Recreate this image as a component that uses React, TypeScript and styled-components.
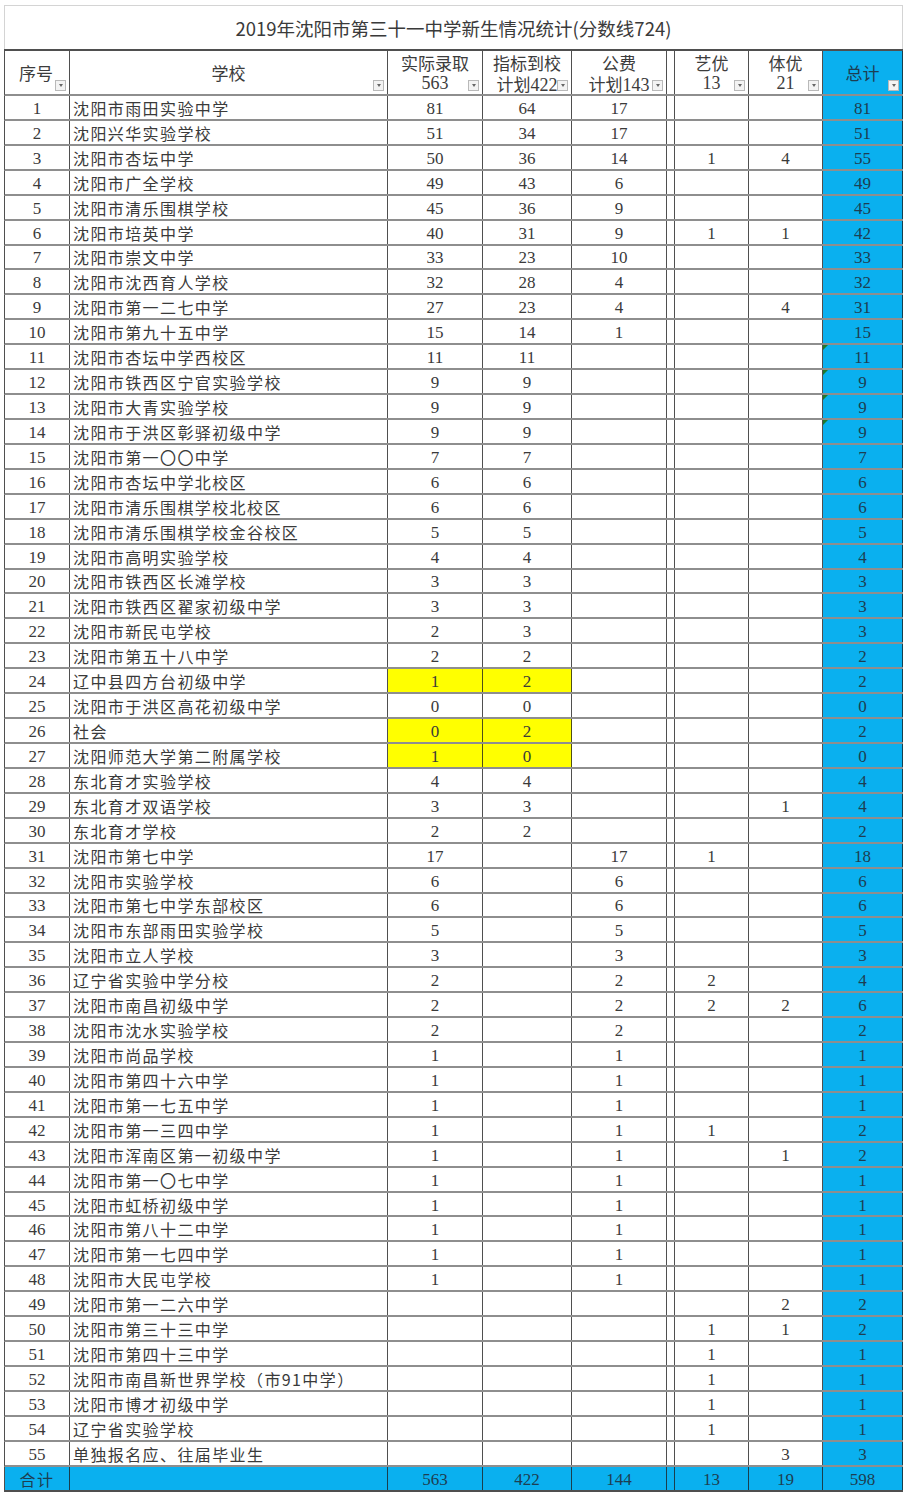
import React from "react";
import styled, { createGlobalStyle } from "styled-components";

const GlobalStyle = createGlobalStyle`
  body {
    margin: 0;
    background: #ffffff;
    font-family: "Noto Sans CJK SC", "Noto Sans", sans-serif;
    color: #333;
  }
`;

const BLUE = "#0ab0ef";
const YELLOW = "#ffff00";
const COLS = "65px 318px 95px 89px 95px 8px 74px 74px 80px";
const LINE = "rgba(30, 30, 30, 0.78)";
const ROWLINE = "rgba(30, 30, 30, 0.5)";

type Row = [string, string, string, string, string, string, string, boolean?, string[]?];

// [name, 实际录取, 指标到校, 公费, 艺优, 体优, 总计, green corner mark, yellow cols]
const rows: Row[] = [
  ["沈阳市雨田实验中学", "81", "64", "17", "", "", "81"],
  ["沈阳兴华实验学校", "51", "34", "17", "", "", "51"],
  ["沈阳市杏坛中学", "50", "36", "14", "1", "4", "55"],
  ["沈阳市广全学校", "49", "43", "6", "", "", "49"],
  ["沈阳市清乐围棋学校", "45", "36", "9", "", "", "45"],
  ["沈阳市培英中学", "40", "31", "9", "1", "1", "42"],
  ["沈阳市崇文中学", "33", "23", "10", "", "", "33"],
  ["沈阳市沈西育人学校", "32", "28", "4", "", "", "32"],
  ["沈阳市第一二七中学", "27", "23", "4", "", "4", "31"],
  ["沈阳市第九十五中学", "15", "14", "1", "", "", "15"],
  ["沈阳市杏坛中学西校区", "11", "11", "", "", "", "11", true],
  ["沈阳市铁西区宁官实验学校", "9", "9", "", "", "", "9", true],
  ["沈阳市大青实验学校", "9", "9", "", "", "", "9", true],
  ["沈阳市于洪区彰驿初级中学", "9", "9", "", "", "", "9", true],
  ["沈阳市第一〇〇中学", "7", "7", "", "", "", "7"],
  ["沈阳市杏坛中学北校区", "6", "6", "", "", "", "6"],
  ["沈阳市清乐围棋学校北校区", "6", "6", "", "", "", "6"],
  ["沈阳市清乐围棋学校金谷校区", "5", "5", "", "", "", "5"],
  ["沈阳市高明实验学校", "4", "4", "", "", "", "4"],
  ["沈阳市铁西区长滩学校", "3", "3", "", "", "", "3"],
  ["沈阳市铁西区翟家初级中学", "3", "3", "", "", "", "3"],
  ["沈阳市新民屯学校", "2", "3", "", "", "", "3"],
  ["沈阳市第五十八中学", "2", "2", "", "", "", "2"],
  ["辽中县四方台初级中学", "1", "2", "", "", "", "2", false, ["a", "b"]],
  ["沈阳市于洪区高花初级中学", "0", "0", "", "", "", "0"],
  ["社会", "0", "2", "", "", "", "2", false, ["a", "b"]],
  ["沈阳师范大学第二附属学校", "1", "0", "", "", "", "0", false, ["a", "b"]],
  ["东北育才实验学校", "4", "4", "", "", "", "4"],
  ["东北育才双语学校", "3", "3", "", "", "1", "4"],
  ["东北育才学校", "2", "2", "", "", "", "2"],
  ["沈阳市第七中学", "17", "", "17", "1", "", "18"],
  ["沈阳市实验学校", "6", "", "6", "", "", "6"],
  ["沈阳市第七中学东部校区", "6", "", "6", "", "", "6"],
  ["沈阳市东部雨田实验学校", "5", "", "5", "", "", "5"],
  ["沈阳市立人学校", "3", "", "3", "", "", "3"],
  ["辽宁省实验中学分校", "2", "", "2", "2", "", "4"],
  ["沈阳市南昌初级中学", "2", "", "2", "2", "2", "6"],
  ["沈阳市沈水实验学校", "2", "", "2", "", "", "2"],
  ["沈阳市尚品学校", "1", "", "1", "", "", "1"],
  ["沈阳市第四十六中学", "1", "", "1", "", "", "1"],
  ["沈阳市第一七五中学", "1", "", "1", "", "", "1"],
  ["沈阳市第一三四中学", "1", "", "1", "1", "", "2"],
  ["沈阳市浑南区第一初级中学", "1", "", "1", "", "1", "2"],
  ["沈阳市第一〇七中学", "1", "", "1", "", "", "1"],
  ["沈阳市虹桥初级中学", "1", "", "1", "", "", "1"],
  ["沈阳市第八十二中学", "1", "", "1", "", "", "1"],
  ["沈阳市第一七四中学", "1", "", "1", "", "", "1"],
  ["沈阳市大民屯学校", "1", "", "1", "", "", "1"],
  ["沈阳市第一二六中学", "", "", "", "", "2", "2"],
  ["沈阳市第三十三中学", "", "", "", "1", "1", "2"],
  ["沈阳市第四十三中学", "", "", "", "1", "", "1"],
  ["沈阳市南昌新世界学校（市91中学）", "", "", "", "1", "", "1"],
  ["沈阳市博才初级中学", "", "", "", "1", "", "1"],
  ["辽宁省实验学校", "", "", "", "1", "", "1"],
  ["单独报名应、往届毕业生", "", "", "", "", "3", "3"],
];

const Page = styled.div`
  padding: 5px 0 8px 4px;
`;

const Sheet = styled.div`
  width: 899px;
`;

const TitleRow = styled.div`
  height: 44px;
  border: 1px solid #d4d4d4;
  border-bottom: none;
  box-sizing: border-box;
  display: flex;
  align-items: center;
  justify-content: center;
  font-size: 18.5px;
  color: #3a3a3a;
`;

const GridRow = styled.div<{ $h: number; $bottom?: string }>`
  display: grid;
  grid-template-columns: ${COLS};
  height: ${(p) => p.$h}px;
  border-left: 1px solid ${LINE};
  border-bottom: ${(p) => p.$bottom || `2px solid ${ROWLINE}`};
  box-sizing: border-box;
`;

const HeaderRow = styled(GridRow)`
  border-top: 2px solid ${LINE};
`;

const HeadCell = styled.div<{ $bg?: string; $start?: boolean }>`
  position: relative;
  border-right: 1px solid ${LINE};
  background: ${(p) => p.$bg || "#fff"};
  display: flex;
  flex-direction: column;
  align-items: ${(p) => (p.$start ? "flex-start" : "center")};
  padding-left: ${(p) => (p.$start ? "14px" : "0")};
  justify-content: center;
  font-size: 17px;
  line-height: 21px;
  color: ${(p) => (p.$bg ? "#1d3e52" : "#3c3c3c")};
  overflow: hidden;
  white-space: nowrap;
`;

const HeadLine = styled.div`
  display: flex;
  align-items: baseline;
  height: 21px;
  line-height: 21px;
`;

const HeadNum = styled.span`
  font-family: "Liberation Serif", "Noto Sans CJK SC", serif;
  font-size: 18px;
  line-height: 21px;
`;

const Filter = styled.span`
  position: absolute;
  right: 3px;
  bottom: 3px;
  width: 11px;
  height: 11px;
  box-sizing: border-box;
  background: #f3f3f3;
  border: 1px solid #b9b9b9;
  display: flex;
  align-items: center;
  justify-content: center;

  &::after {
    content: "";
    border-left: 2.5px solid transparent;
    border-right: 2.5px solid transparent;
    border-top: 3px solid #666;
  }
`;

const Cell = styled.div<{ $bg?: string; $left?: boolean; $serif?: boolean; $dark?: boolean }>`
  position: relative;
  border-right: 1px solid ${LINE};
  background: ${(p) => p.$bg || "#fff"};
  display: flex;
  align-items: center;
  justify-content: ${(p) => (p.$left ? "flex-start" : "center")};
  padding-left: ${(p) => (p.$left ? "3px" : "0")};
  font-family: ${(p) =>
    p.$serif
      ? `"Liberation Serif", "Noto Sans CJK SC", serif`
      : `"Noto Sans CJK SC", "Noto Sans", sans-serif`};
  font-size: ${(p) => (p.$serif ? "17px" : "16px")};
  line-height: 19px;
  letter-spacing: ${(p) => (p.$serif ? "0" : "1.4px")};
  color: ${(p) => (p.$dark ? "#1d3e52" : "#3a3a3a")};
  white-space: nowrap;
  overflow: hidden;
  padding-top: 2px;
  box-sizing: border-box;
`;

const GreenMark = styled.span`
  position: absolute;
  left: 0;
  top: 0;
  width: 0;
  height: 0;
  border-top: 5px solid #1f7a2e;
  border-right: 5px solid transparent;
`;

const FooterCell = styled(Cell)`
  color: #1d3e52;
`;

const App: React.FC = () => {
  return (
    <>
      <GlobalStyle />
      <Page>
        <Sheet>
          <TitleRow>2019年沈阳市第三十一中学新生情况统计(分数线724)</TitleRow>

          <HeaderRow $h={47}>
            <HeadCell $start>
              序号
              <Filter />
            </HeadCell>
            <HeadCell>
              学校
              <Filter />
            </HeadCell>
            <HeadCell>
              <HeadLine>实际录取</HeadLine>
              <HeadLine>
                <HeadNum>563</HeadNum>
              </HeadLine>
              <Filter />
            </HeadCell>
            <HeadCell>
              <HeadLine>指标到校</HeadLine>
              <HeadLine>
                计划<HeadNum>422</HeadNum>
              </HeadLine>
              <Filter />
            </HeadCell>
            <HeadCell>
              <HeadLine>公费</HeadLine>
              <HeadLine>
                计划<HeadNum>143</HeadNum>
              </HeadLine>
              <Filter />
            </HeadCell>
            <HeadCell />
            <HeadCell>
              <HeadLine>艺优</HeadLine>
              <HeadLine>
                <HeadNum>13</HeadNum>
              </HeadLine>
              <Filter />
            </HeadCell>
            <HeadCell>
              <HeadLine>体优</HeadLine>
              <HeadLine>
                <HeadNum>21</HeadNum>
              </HeadLine>
              <Filter />
            </HeadCell>
            <HeadCell $bg={BLUE}>
              总计
              <Filter />
            </HeadCell>
          </HeaderRow>

          {rows.map((r, i) => {
            const [name, a, b, c, d, e, total, mark, yellow] = r;
            const y = yellow || [];
            return (
              <GridRow key={i} $h={24.93}>
                <Cell $serif>{i + 1}</Cell>
                <Cell $left>{name}</Cell>
                <Cell $serif $bg={y.includes("a") ? YELLOW : undefined}>{a}</Cell>
                <Cell $serif $bg={y.includes("b") ? YELLOW : undefined}>{b}</Cell>
                <Cell $serif>{c}</Cell>
                <Cell />
                <Cell $serif>{d}</Cell>
                <Cell $serif>{e}</Cell>
                <Cell $serif $dark $bg={BLUE}>
                  {mark && <GreenMark />}
                  {total}
                </Cell>
              </GridRow>
            );
          })}

          <GridRow $h={25} $bottom={`2px solid ${LINE}`}>
            <FooterCell $bg={BLUE}>合计</FooterCell>
            <FooterCell $bg={BLUE} />
            <FooterCell $serif $bg={BLUE}>563</FooterCell>
            <FooterCell $serif $bg={BLUE}>422</FooterCell>
            <FooterCell $serif $bg={BLUE}>144</FooterCell>
            <FooterCell $bg={BLUE} />
            <FooterCell $serif $bg={BLUE}>13</FooterCell>
            <FooterCell $serif $bg={BLUE}>19</FooterCell>
            <FooterCell $serif $bg={BLUE}>598</FooterCell>
          </GridRow>
        </Sheet>
      </Page>
    </>
  );
};

export default App;
